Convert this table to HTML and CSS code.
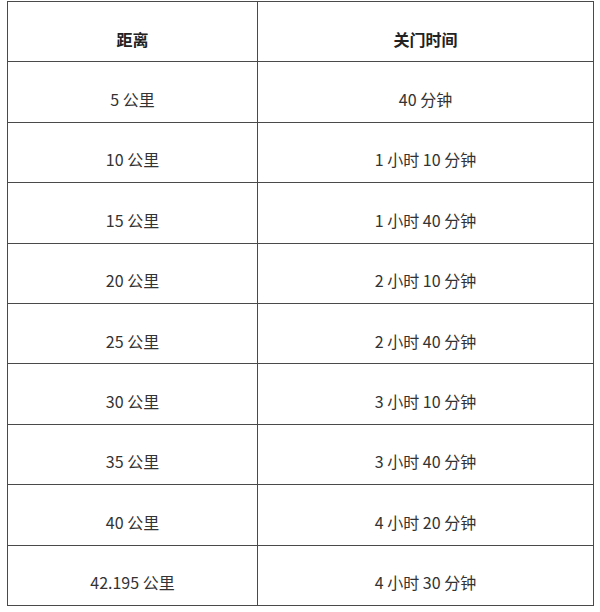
FILE: index.html
```html
<!DOCTYPE html>
<html lang="zh">
<head>
<meta charset="utf-8">
<link rel="stylesheet" href="styles.css">
</head>
<body>
<table class="cutoff">
  <thead>
    <tr><th class="col-dist">距离</th><th class="col-time">关门时间</th></tr>
  </thead>
  <tbody>
    <tr><td>5 公里</td><td>40 分钟</td></tr>
    <tr><td>10 公里</td><td>1 小时 10 分钟</td></tr>
    <tr><td>15 公里</td><td>1 小时 40 分钟</td></tr>
    <tr><td>20 公里</td><td>2 小时 10 分钟</td></tr>
    <tr><td>25 公里</td><td>2 小时 40 分钟</td></tr>
    <tr><td>30 公里</td><td>3 小时 10 分钟</td></tr>
    <tr><td>35 公里</td><td>3 小时 40 分钟</td></tr>
    <tr><td>40 公里</td><td>4 小时 20 分钟</td></tr>
    <tr><td>42.195 公里</td><td>4 小时 30 分钟</td></tr>
  </tbody>
</table>
</body>
</html>
```
FILE: styles.css
```css
html, body {
  margin: 0;
  padding: 0;
  background: #ffffff;
}
body {
  padding: 1px 0 0 7px;
  font-family: "Noto Sans CJK SC", "Noto Sans", sans-serif;
  color: #333333;
}
.cutoff {
  border-collapse: collapse;
  width: 586px;
  table-layout: fixed;
}
.col-dist { width: 250px; }
.col-time { width: 336px; }
.cutoff th,
.cutoff td {
  border: 1px solid #4a4a4a;
  height: 60.4px;
  box-sizing: border-box;
  padding: 14px 0 0;
  text-align: center;
  vertical-align: middle;
  font-size: 16px;
  line-height: 20px;
}
.cutoff th {
  font-weight: 700;
  color: #222222;
}
```
